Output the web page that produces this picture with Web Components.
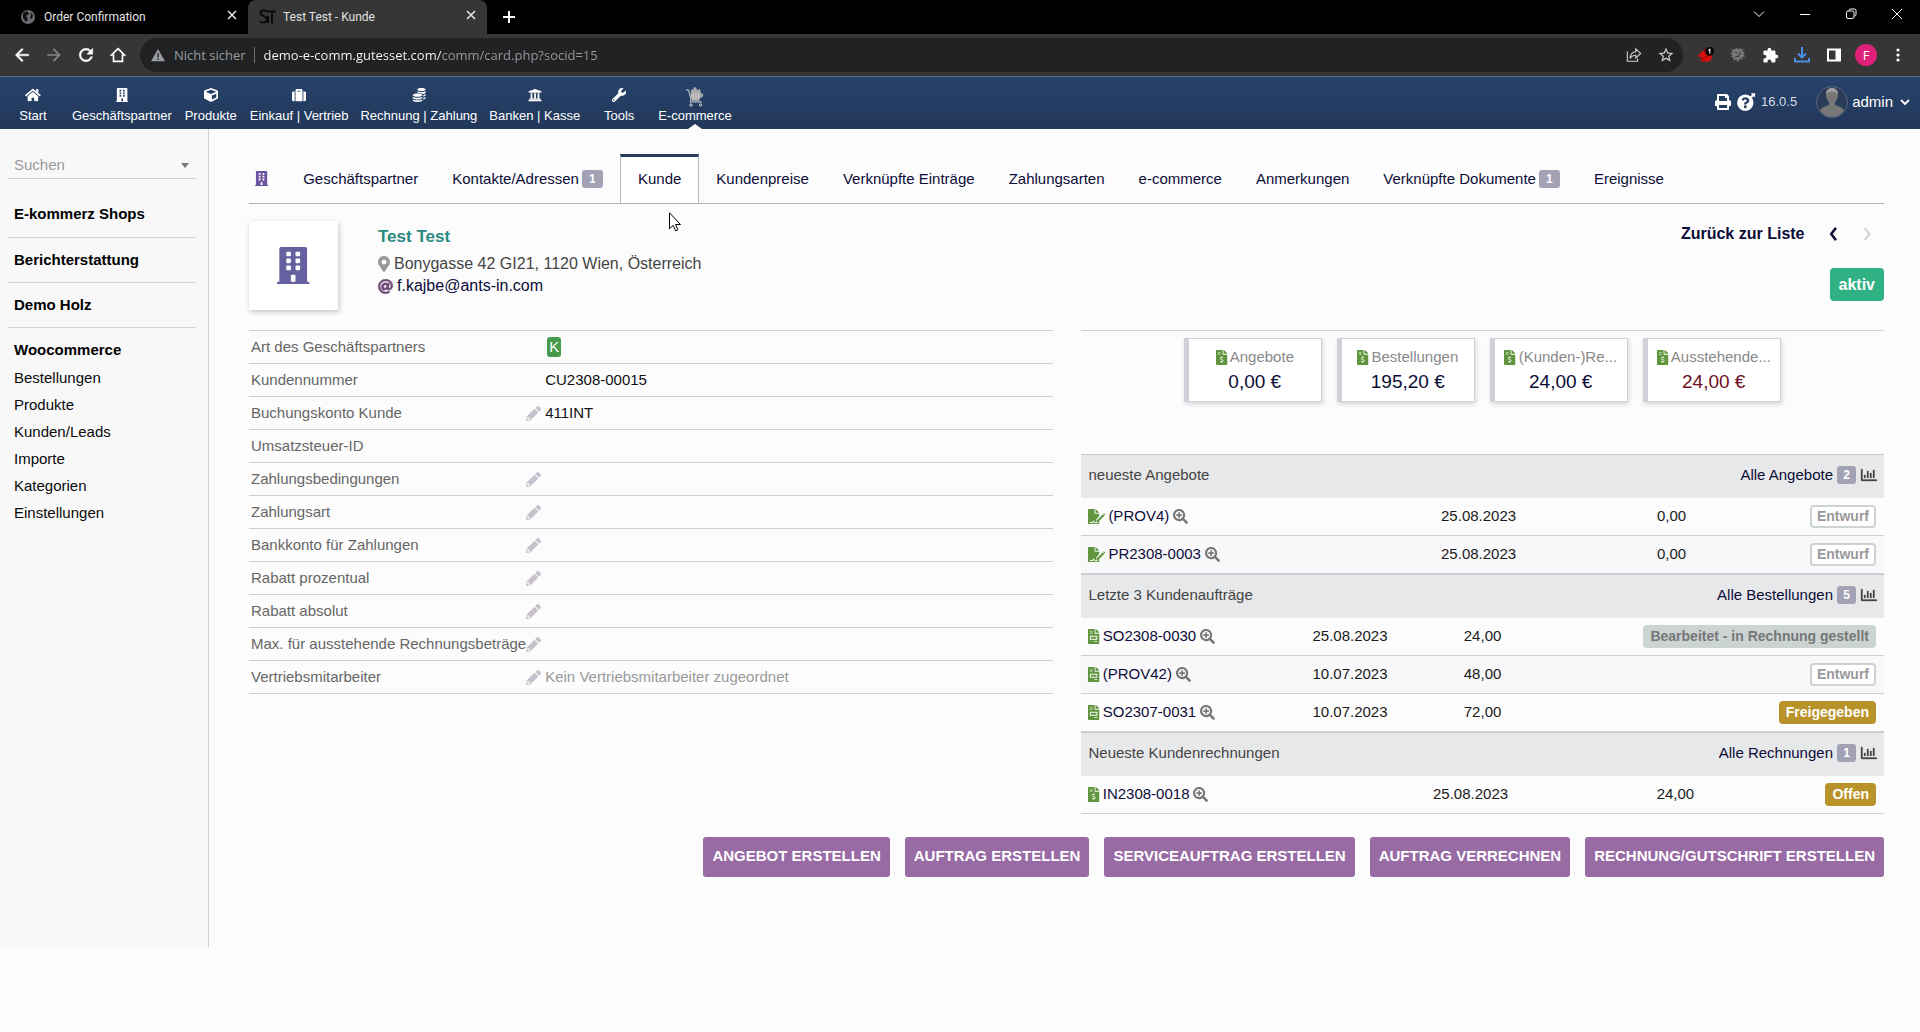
<!DOCTYPE html>
<html lang="de">
<head>
<meta charset="utf-8">
<title>Test Test - Kunde</title>
<style>
  body { margin: 0; background: #fcfcfc; color: #111; font: 15px/20px "Liberation Sans", Arial, sans-serif; }
</style>
</head>
<body>
<browser-bar></browser-bar>
<top-nav></top-nav>
<app-layout>
  <side-menu slot="side"></side-menu>
  <page-tabs></page-tabs>
  <company-banner></company-banner>
  <card-columns>
    <company-facts slot="left"></company-facts>
    <summary-cards slot="right"></summary-cards>
    <document-list slot="right" kind="offers"></document-list>
    <document-list slot="right" kind="orders"></document-list>
    <document-list slot="right" kind="invoices"></document-list>
  </card-columns>
  <action-bar></action-bar>
</app-layout>
<mouse-pointer></mouse-pointer>

<script>
const PAGE = 'M377 105L279.1 7c-4.500-4.500-10.600-7-17-7H256v128h128v-6.100c0-6.300-2.500-12.400-7-16.900zM224 136V0H24C10.700 0 0 10.700 0 24v464c0 13.300 10.700 24 24 24h336c13.300 0 24-10.700 24-24V160H248c-13.200 0-24-10.800-24-24z';
const ICONS = {
  building: ['0 0 448 512', '<path d="M436 480h-20V24c0-13.255-10.745-24-24-24H56C42.745 0 32 10.745 32 24v456H12c-6.627 0-12 5.373-12 12v20h448v-20c0-6.627-5.373-12-12-12zM128 76c0-6.627 5.373-12 12-12h40c6.627 0 12 5.373 12 12v40c0 6.627-5.373 12-12 12h-40c-6.627 0-12-5.373-12-12V76zm0 96c0-6.627 5.373-12 12-12h40c6.627 0 12 5.373 12 12v40c0 6.627-5.373 12-12 12h-40c-6.627 0-12-5.373-12-12v-40zm52 148h-40c-6.627 0-12-5.373-12-12v-40c0-6.627 5.373-12 12-12h40c6.627 0 12 5.373 12 12v40c0 6.627-5.373 12-12 12zm76 160h-64v-84c0-6.627 5.373-12 12-12h40c6.627 0 12 5.373 12 12v84zm64-172c0 6.627-5.373 12-12 12h-40c-6.627 0-12-5.373-12-12v-40c0-6.627 5.373-12 12-12h40c6.627 0 12 5.373 12 12v40zm0-96c0 6.627-5.373 12-12 12h-40c-6.627 0-12-5.373-12-12v-40c0-6.627 5.373-12 12-12h40c6.627 0 12 5.373 12 12v40zm0-96c0 6.627-5.373 12-12 12h-40c-6.627 0-12-5.373-12-12V76c0-6.627 5.373-12 12-12h40c6.627 0 12 5.373 12 12v40z"/>'],
  home: ['0 0 576 512', '<path d="M280.37 148.26L96 300.11V464a16 16 0 0 0 16 16l112.06-.29a16 16 0 0 0 15.920-16V368a16 16 0 0 1 16-16h64a16 16 0 0 1 16 16v95.640a16 16 0 0 0 16 16.050L464 480a16 16 0 0 0 16-16V300L295.67 148.26a12.190 12.190 0 0 0-15.300 0zM571.6 251.47L488 182.56V44.050a12 12 0 0 0-12-12h-56a12 12 0 0 0-12 12v72.610L318.47 43a48 48 0 0 0-61 0L4.340 251.47a12 12 0 0 0-1.600 16.900l25.500 31A12 12 0 0 0 45.150 301l235.22-193.74a12.190 12.190 0 0 1 15.300 0L530.9 301a12 12 0 0 0 16.900-1.600l25.500-31a12 12 0 0 0-1.700-16.930z"/>'],
  cube: ['0 0 512 512', '<path d="M239.1 6.300l-208 78c-18.700 7-31.100 25-31.100 45v225.1c0 18.200 10.300 34.800 26.500 42.900l208 104c13.500 6.800 29.400 6.800 42.900 0l208-104c16.300-8.100 26.500-24.800 26.500-42.900V129.3c0-20-12.400-37.900-31.100-44.900l-208-78C262 2.200 250 2.200 239.1 6.300zM256 68.400l192 72v1.100l-192 78-192-78v-1.100l192-72zm32 356V275.5l160-65v133.9l-160 80z"/>'],
  suitcase: ['0 0 512 512', '<path d="M128 480h256V80c0-26.500-21.500-48-48-48H176c-26.500 0-48 21.500-48 48v400zm64-384h128v32H192V96zm320 80v256c0 26.500-21.500 48-48 48h-48V128h48c26.500 0 48 21.500 48 48zM96 480H48c-26.500 0-48-21.500-48-48V176c0-26.500 21.500-48 48-48h48v352z"/>'],
  bank: ['0 0 512 512', '<path d="M496 128v16a8 8 0 0 1-8 8h-24v12c0 6.627-5.373 12-12 12H60c-6.627 0-12-5.373-12-12v-12H24a8 8 0 0 1-8-8v-16a8 8 0 0 1 4.941-7.392l232-88a7.996 7.996 0 0 1 6.118 0l232 88A8 8 0 0 1 496 128zm-24 304H40c-13.255 0-24 10.745-24 24v16a8 8 0 0 0 8 8h464a8 8 0 0 0 8-8v-16c0-13.255-10.745-24-24-24zM96 192v192H60c-6.627 0-12 5.373-12 12v20h416v-20c0-6.627-5.373-12-12-12h-36V192h-64v192h-64V192h-64v192h-64V192H96z"/>'],
  wrench: ['0 0 512 512', '<path d="M507.73 109.1c-2.240-9.030-13.540-12.090-20.120-5.510l-74.360 74.360-67.880-11.310-11.310-67.880 74.360-74.360c6.620-6.620 3.430-17.900-5.660-20.160-47.380-11.740-99.550.91-136.58 37.930-39.640 39.640-50.550 97.100-34.050 147.2L18.740 402.76c-24.990 24.990-24.990 65.510 0 90.500 24.990 24.990 65.510 24.990 90.500 0l213.21-213.21c50.120 16.710 107.47 5.680 147.37-34.220 37.070-37.070 49.700-89.320 37.910-136.73zM64 472c-13.260 0-24-10.750-24-24 0-13.260 10.750-24 24-24s24 10.750 24 24c0 13.250-10.750 24-24 24z"/>'],
  coins: ['0 0 16 16', '<path d="M6 1.700C6 .8 8 0 10.800 0s4.800.8 4.800 1.700-2 1.800-4.800 1.800S6 2.600 6 1.700zM15.600 3.500v1.700c0 .8-1.500 1.500-3.600 1.700-.9-.8-2.700-1.300-4.800-1.500C6.400 5 6 4.600 6 4.200V3.500c1 .7 2.800 1.100 4.800 1.100s3.800-.4 4.800-1.100zM15.400 6.900v1.500c0 .6-1 1.200-2.500 1.500V8c1-.3 1.900-.6 2.500-1.100zM15.400 10.200v1.500c0 .6-1 1.200-2.500 1.500v-1.900c1-.3 1.900-.6 2.500-1.100zM.8 8.200c0-1 2.500-1.800 5.600-1.800s5.500.8 5.500 1.800S9.500 10 6.400 10 .8 9.200.8 8.200zM.8 9.900c1.200.8 3.300 1.200 5.600 1.200s4.300-.4 5.500-1.200v1.500c0 1-2.400 1.700-5.500 1.700S.8 12.400.8 11.400zM.8 13c1.200.7 3.300 1.100 5.600 1.100s4.300-.4 5.500-1.100v1.300c0 .9-2.400 1.700-5.500 1.700s-5.600-.8-5.600-1.700z"/>'],
  cart: ['0 0 18 20', '<path fill="#aaa" d="M5 3l2.500-1L8 0l2 .5L11 3l3-1 1 4 2.500 1.500-1.500 3-2 .5-.5 3H6L4.500 9z"/><path d="M0 3h2.500l2.500 9.500-1 2.500h12M7 6l.5 6M10 6v6M12.500 6v6" fill="none" stroke="#d5d5d5"/><g fill="none" stroke="#ccc"><circle cx="5" cy="18" r="1.200"/><circle cx="14.500" cy="18" r="1.200"/></g>'],
  zoom: ['0 0 512 512', '<path d="M304 192v32c0 6.600-5.400 12-12 12h-56v56c0 6.600-5.400 12-12 12h-32c-6.600 0-12-5.400-12-12v-56h-56c-6.600 0-12-5.400-12-12v-32c0-6.600 5.400-12 12-12h56v-56c0-6.600 5.400-12 12-12h32c6.600 0 12 5.400 12 12v56h56c6.600 0 12 5.400 12 12zm201 284.7L476.7 505c-9.400 9.400-24.600 9.400-33.900 0L343 405.3c-4.500-4.500-7-10.600-7-17V372c-35.300 27.600-79.700 44-128 44C93.100 416 0 322.9 0 208S93.100 0 208 0s208 93.100 208 208c0 48.300-16.400 92.700-44 128h16.300c6.400 0 12.500 2.500 17 7l99.700 99.700c9.300 9.400 9.300 24.600 0 34zM344 208c0-75.200-60.800-136-136-136S72 132.8 72 208s60.800 136 136 136 136-60.800 136-136z"/>'],
  pencil: ['0 0 512 512', '<path d="M497.9 142.1l-46.100 46.100c-4.700 4.700-12.300 4.700-17 0l-111-111c-4.700-4.700-4.700-12.300 0-17l46.100-46.100c18.700-18.700 49.100-18.700 67.900 0l60.100 60.100c18.800 18.700 18.800 49.100 0 67.900zM284.2 99.800L21.600 362.4.4 483.9c-2.900 16.400 11.400 30.600 27.800 27.800l121.5-21.300 262.6-262.6c4.700-4.700 4.700-12.300 0-17l-111-111c-4.800-4.700-12.400-4.700-17.100 0zM88 424h48v36.300l-64.500 11.300-31.100-31.100L51.700 376H88v48z"/>'],
  marker: ['0 0 384 512', '<path d="M172.268 501.67C26.970 291.031 0 269.413 0 192 0 85.961 85.961 0 192 0s192 85.961 192 192c0 77.413-26.970 99.031-172.268 309.67-9.535 13.774-29.930 13.773-39.464 0zM192 272c44.183 0 80-35.817 80-80s-35.817-80-80-80-80 35.817-80 80 35.817 80 80 80z"/>'],
  at: ['0 0 512 512', '<path stroke="currentColor" stroke-width="14" d="M256 8C118.941 8 8 118.919 8 256c0 137.059 110.919 248 248 248 48.154 0 95.342-14.140 135.408-40.223 12.005-7.815 14.625-24.288 5.552-35.372l-10.177-12.433c-7.671-9.371-21.179-11.667-31.373-5.129C325.92 429.757 291.314 440 256 440c-101.458 0-184-82.542-184-184S154.542 72 256 72c100.139 0 184 57.619 184 160 0 38.786-21.093 79.742-58.170 83.693-17.349-.454-16.910-12.857-13.476-30.024l23.433-121.11C394.653 149.75 383.308 136 368.225 136h-44.981a13.518 13.518 0 0 0-13.432 11.993l-.01.092c-14.697-17.901-40.448-21.775-59.971-21.775-74.580 0-137.831 62.234-137.831 151.46 0 65.303 36.785 105.87 96 105.87 26.984 0 57.369-15.637 74.991-38.333 9.522 34.104 40.613 34.104 70.710 34.104C462.609 379.41 504 307.798 504 232 504 95.653 394.023 8 256 8zm-21.680 304.43c-22.249 0-36.070-15.623-36.070-40.771 0-44.993 30.779-72.729 58.630-72.729 22.292 0 35.601 15.241 35.601 40.770 0 45.061-33.875 72.730-58.161 72.730z"/>'],
  order: ['0 0 384 512', `<path fill-rule="evenodd" d="${PAGE}M64 64h96v24H64zM64 128h96v24H64zM64 232h256v136H64zM96 264v72h192v-72zM208 416h112v28H208z"/>`],
  invoice: ['0 0 384 512', `<path fill-rule="evenodd" d="${PAGE}M64 64h96v24H64zM64 128h96v24H64z"/><path d="M244 266c-20-24-98-22-98 20 0 52 98 26 98 78 0 42-80 46-104 16M192 220v36M192 396v40" fill="none" stroke="#fff" stroke-width="32"/>`],
  signature: ['0 0 576 512', '<path fill-rule="evenodd" d="M256 0v128h128zM224 136V0H24C10.700 0 0 10.700 0 24v464c0 13.300 10.700 24 24 24h336c13.300 0 24-10.700 24-24v-70l-70 68H230l-30-50-30 44H64v-36h88l38-60 52 68h36v-84L384 230v-70H248c-13.200 0-24-10.800-24-24z"/><path d="M288 400l220-222 52 52-220 220h-52z"/><path d="M520 166l20-20 56 52-24 24z"/>'],
  chart: ['0 0 512 512', '<path stroke="currentColor" stroke-width="10" d="M396.8 352h22.400c6.400 0 12.800-6.400 12.800-12.800V108.8c0-6.400-6.400-12.800-12.800-12.800h-22.400c-6.400 0-12.800 6.400-12.800 12.800v230.4c0 6.400 6.400 12.800 12.800 12.800zm-192 0h22.400c6.400 0 12.800-6.400 12.800-12.800V140.8c0-6.400-6.400-12.800-12.800-12.800h-22.400c-6.400 0-12.800 6.400-12.800 12.800v198.4c0 6.400 6.400 12.800 12.800 12.800zm96 0h22.400c6.400 0 12.800-6.400 12.800-12.800V204.8c0-6.400-6.400-12.800-12.800-12.800h-22.400c-6.400 0-12.800 6.400-12.800 12.800v134.4c0 6.400 6.400 12.800 12.800 12.800zM496 400H48V80c0-8.840-7.160-16-16-16H16C7.160 64 0 71.160 0 80v336c0 17.670 14.330 32 32 32h464c8.840 0 16-7.160 16-16v-16c0-8.840-7.160-16-16-16zm-387.2-48h22.400c6.400 0 12.800-6.400 12.800-12.800v-70.400c0-6.400-6.400-12.800-12.800-12.800h-22.400c-6.400 0-12.800 6.400-12.800 12.800v70.400c0 6.400 6.400 12.800 12.800 12.800z"/>'],
  print: ['0 0 512 512', '<path d="M448 192V77.250c0-8.490-3.370-16.620-9.370-22.630L393.37 9.370c-6-6-14.140-9.370-22.630-9.370H96C78.330 0 64 14.330 64 32v160c-35.350 0-64 28.650-64 64v112c0 8.840 7.160 16 16 16h48v96c0 17.670 14.330 32 32 32h320c17.670 0 32-14.330 32-32v-96h48c8.840 0 16-7.160 16-16V256c0-35.350-28.650-64-64-64zm-64 256H128v-96h256v96zm0-224H128V64h192v48c0 8.840 7.160 16 16 16h48v96z"/>'],
  help: ['0 -40 560 552', '<path d="M504 256c0 136.997-111.043 248-248 248S8 392.997 8 256C8 119.083 119.043 8 256 8s248 111.083 248 248zM262.655 90c-54.497 0-89.255 22.957-116.549 63.758-3.536 5.286-2.353 12.415 2.715 16.258l34.699 26.310c5.205 3.947 12.621 3.008 16.665-2.122 17.864-22.658 30.113-35.797 57.303-35.797 20.429 0 45.698 13.148 45.698 32.958 0 14.976-12.363 22.667-32.534 33.976C247.128 238.528 216 254.941 216 296v4c0 6.627 5.373 12 12 12h56c6.627 0 12-5.373 12-12v-1.333c0-28.462 83.186-29.647 83.186-106.667 0-58.002-60.165-102-116.531-102zM256 338c-25.365 0-46 20.635-46 46 0 25.364 20.635 46 46 46s46-20.636 46-46c0-25.365-20.635-46-46-46z"/><path d="M420-36h136V100l-44-44-60 60-50-50 60-60z"/>'],
  avatar: ['0 0 32 32', '<circle cx="16" cy="16" r="15.500" fill="#2b3c58" stroke="#55657e"/><path d="M16 2c-3.600 0-6 2.600-6 6.500 0 3 1 6 3 7.500v3l-6.500 2.500c-1.200.6-2 1.800-2.400 3.200A15 15 0 0 0 16 31a15 15 0 0 0 11.900-6.300c-.4-1.400-1.200-2.600-2.400-3.200L19 19v-3c2-1.500 3-4.500 3-7.500C22 4.600 19.600 2 16 2z" fill="#77777a"/><path d="M16 2c-3.600 0-6 2.600-6 6.500 2-4 10-4 12 0C22 4.600 19.600 2 16 2z" fill="#a0a0a0"/>'],
  down: ['0 0 10 10', '<path d="M1 3l4 4 4-4" fill="none" stroke="currentColor" stroke-width="1.800"/>'],
  left: ['0 0 10 16', '<path d="M8 1L2.500 8 8 15" fill="none" stroke="currentColor" stroke-width="2.800"/>'],
  right: ['0 0 10 16', '<path d="M2 1.500L7.500 8 2 14.500" fill="none" stroke="currentColor" stroke-width="2"/>'],
  globe: ['0 0 16 16', '<circle cx="8" cy="8" r="7" fill="#6a6d72"/><path d="M3 4l4-2 2 3-3 2 2 3-2 3-3-4zM10 3l3 3-1 4-2-1 1-3z" fill="#111"/>'],
  stlogo: ['0 0 18 18', '<path d="M9 4C7 1.500 1.500 2 1.500 5s6.500 3 6.500 6.500-5 4-7 1.500M9 3.500h8M13 3.500v12M9 8v7" fill="none" stroke="#0b0b0d" stroke-width="2"/>'],
  close: ['0 0 12 12', '<path d="M2 2l8 8M10 2l-8 8" stroke="currentColor" stroke-width="1.600"/>'],
  plus: ['0 0 14 14', '<path d="M7 1v12M1 7h12" stroke="currentColor" stroke-width="2"/>'],
  winchevron: ['0 0 12 12', '<path d="M1 3.500l5 5 5-5" fill="none" stroke="currentColor"/>'],
  minimize: ['0 0 12 12', '<path d="M1 6.500h10" stroke="currentColor"/>'],
  restore: ['0 0 12 12', '<path d="M4 2.500q0-1.500 1.500-1.500h4q1.500 0 1.500 1.500v4q0 1.500-1.500 1.500" fill="none" stroke="currentColor"/><rect x="1.500" y="3" width="7.500" height="7.500" rx="1.500" fill="none" stroke="currentColor"/>'],
  winclose: ['0 0 12 12', '<path d="M1 1l10 10M11 1L1 11" stroke="currentColor"/>'],
  back: ['0 0 24 24', '<path d="M20 11H7.830l5.590-5.590L12 4l-8 8 8 8 1.410-1.410L7.830 13H20v-2z" stroke="currentColor" stroke-width=".6"/>'],
  forward: ['0 0 24 24', '<path d="M12 4l-1.410 1.410L16.170 11H4v2h12.170l-5.580 5.590L12 20l8-8z"/>'],
  reload: ['0 0 24 24', '<path d="M17.650 6.350C16.200 4.900 14.210 4 12 4c-4.420 0-7.990 3.580-7.990 8s3.570 8 7.990 8c3.730 0 6.840-2.550 7.730-6h-2.080c-.82 2.330-3.040 4-5.650 4-3.310 0-6-2.690-6-6s2.690-6 6-6c1.660 0 3.140.69 4.220 1.780L13 11h7V4l-2.350 2.350z" stroke="currentColor" stroke-width=".6"/>'],
  house: ['0 0 24 24', '<path d="M12 3.500l8.500 8.500h-2.500v8.500H6V12H3.500z" fill="none" stroke="currentColor" stroke-width="2.200"/>'],
  warning: ['0 0 16 16', '<path fill-rule="evenodd" d="M8 1L0 15h16zM7.200 6h1.600v4.500H7.200zM7.200 11.700h1.600v1.600H7.200z"/>'],
  share: ['0 0 18 18', '<path d="M1.500 5v11h11.500v-3M4.500 13c.5-5 3-7.500 6.500-7.700V2l5.500 5.200-5.500 5.200V9.300c-3 0-4.800 1-6.500 3.700z" fill="none" stroke="currentColor" stroke-width="1.300"/>'],
  star: ['0 0 24 24', '<path d="M22 9.240l-7.190-.62L12 2 9.190 8.630 2 9.240l5.460 4.730L5.820 21 12 17.270 18.180 21l-1.630-7.030L22 9.240zM12 15.400l-3.760 2.270 1-4.280-3.320-2.880 4.380-.38L12 6.100l1.710 4.040 4.380.38-3.320 2.880 1 4.280L12 15.400z"/>'],
  bug: ['0 0 20 20', '<path d="M3 8l3-2 4-3 4 1 2 3 1 5-2 4-4 2-3-1-3 1-1-3 2-2-4-1-2-2 3 0z" fill="#d40f0f"/><path d="M9 2l-1 5M6 15l6-4" stroke="#7a0000"/><circle cx="14" cy="6" r="4.800" fill="#000"/><path d="M12.800 5l1.500-1.200V8.500" fill="none" stroke="#fff" stroke-width="1.200"/>'],
  graybug: ['0 0 20 20', '<path d="M9 2l1 2 3-2 0 2 3-1-1 3 3 1-2 2 2 3-3 0 0 3-3-1-2 4-2-3-3 1 0-3-3-1 2-2-3-2 3-1-1-3 3 0z" fill="#77777a"/><path d="M7 7l2 1M12 7v3M7 12l5-1" stroke="#3a3a3a" stroke-width="1.400"/>'],
  puzzle: ['0 0 24 24', '<path d="M20.500 11H19V7c0-1.100-.9-2-2-2h-4V3.500C13 2.120 11.880 1 10.500 1S8 2.120 8 3.500V5H4c-1.100 0-1.990.9-1.990 2v3.800H3.500c1.490 0 2.700 1.210 2.700 2.700s-1.210 2.700-2.700 2.700H2V20c0 1.100.9 2 2 2h3.800v-1.500c0-1.490 1.210-2.700 2.700-2.700 1.490 0 2.700 1.210 2.700 2.700V22H17c1.100 0 2-.9 2-2v-4h1.500c1.380 0 2.500-1.120 2.500-2.500S21.880 11 20.500 11z"/>'],
  download: ['0 0 18 18', '<path d="M9 1v10M5 7.500l4 4 4-4M2 12v3.500h14V12" fill="none" stroke="#4a8fe0" stroke-width="2"/>'],
  panel: ['0 0 16 16', '<path fill-rule="evenodd" d="M1 1.500h14v13H1zM3 3.500v9h6.500v-9z"/>'],
  dots: ['0 0 16 16', '<circle cx="8" cy="3" r="1.600"/><circle cx="8" cy="8" r="1.600"/><circle cx="8" cy="13" r="1.600"/>'],
};
const BASE = `*{box-sizing:border-box} a{color:inherit;text-decoration:none} button{font:inherit;color:inherit;background:none;border:0;padding:0;cursor:pointer} ul{list-style:none;margin:0;padding:0}`;
function element(name, css, render) {
  customElements.define(name, class extends HTMLElement {
    constructor() { super(); this.attachShadow({ mode: 'open' }); }
    connectedCallback() {
      const t = document.createElement('template');
      t.innerHTML = `<style>${BASE}${css}</style>${render(this)}`;
      this.shadowRoot.replaceChildren(t.content.cloneNode(true));
    }
  });
}
const icon = (name, size = 16) => `<ui-icon name="${name}" style="height:${size}px"></ui-icon>`;

element('ui-icon', ':host{display:inline-block;flex:none} svg{display:block;height:100%;width:auto;fill:currentColor;overflow:visible}', el => {
  const [box, body] = ICONS[el.getAttribute('name')];
  return `<svg viewBox="${box}" aria-hidden="true">${body}</svg>`;
});

element('count-badge', ':host{display:inline-block;min-width:19px;padding:0 6px;border-radius:3px;background:#a3a2b5;color:#fff;font:bold 12px/18px "Liberation Sans",Arial,sans-serif;text-align:center}', () => '<slot></slot>');

element('status-badge', `:host{display:inline-block;padding:0 5px;border:2px solid #cbd3d3;border-radius:4px;background:#fff;color:#999;font:bold 14px/19px "Liberation Sans",Arial,sans-serif}
  :host([tone=billed]){background:#cbd3d3;color:#777} :host([tone=open]){background:#b9932a;border-color:#b9932a;color:#fff}`, () => '<slot></slot>');

element('browser-bar', `
  :host{display:block;background:#000;color:#fff;font:12px/16px Roboto,"Open Sans",sans-serif;border-bottom:1px solid #5b6f8c}
  .strip{display:flex;height:34px;align-items:stretch}
  .tab{display:flex;align-items:center;gap:8px;width:248px;padding:0 10px 0 20px;color:#e3e3e3}
  .tab span{flex:1} .tab.on{width:239px;gap:6px;padding-left:11px;background:#363636;border-radius:8px 8px 0 0}
  .new{width:44px;display:grid;place-items:center}
  .win{display:flex;margin-left:auto} .win button{width:46px;height:28px;display:grid;place-items:center}
  .tools{display:flex;align-items:center;height:42px;background:#363636;padding:0 6px}
  .tools>button{width:32px;height:32px;display:grid;place-items:center}
  .box{flex:1;display:flex;align-items:center;height:34px;margin:0 7px 0 6px;padding:0 1px 0 11px;border-radius:17px;background:#212224;color:#9a9da1;font:13px/18px "Open Sans","Noto Sans",sans-serif}
  .box button{width:32px;height:32px;display:grid;place-items:center;color:#d0d0d0}
  .box span{margin:0 8px 0 9px} .box i{width:1px;height:16px;background:#6b6e72;margin-right:9px}
  input{flex:1;border:0;outline:0;padding:0;font:inherit;background:linear-gradient(90deg,#fff 178px,#9a9da1 178px);background-clip:text;-webkit-background-clip:text;-webkit-text-fill-color:transparent;color:#9a9da1}
  .face{width:22px;height:22px;border-radius:50%;background:#e0217a;display:grid;place-items:center;font:13px/22px "Open Sans",sans-serif}
`, () => `
  <div class="strip">
    <div class="tab">${icon('globe')}<span>Order Confirmation</span><button aria-label="Tab schließen">${icon('close', 12)}</button></div>
    <div class="tab on">${icon('stlogo', 18)}<span>Test Test - Kunde</span><button aria-label="Tab schließen">${icon('close', 12)}</button></div>
    <button class="new" aria-label="Neuer Tab">${icon('plus', 14)}</button>
    <div class="win">${['winchevron', 'minimize', 'restore', 'winclose'].map(n => `<button aria-label="${n}">${icon(n, 12)}</button>`).join('')}</div>
  </div>
  <div class="tools">
    <button aria-label="Zurück">${icon('back', 20)}</button><button aria-label="Vorwärts" style="color:#85878a">${icon('forward', 20)}</button>
    <button aria-label="Neu laden">${icon('reload', 20)}</button><button aria-label="Startseite">${icon('house', 18)}</button>
    <div class="box">${icon('warning', 14)}<span>Nicht sicher</span><i></i>
      <input aria-label="Adresse" value="demo-e-comm.gutesset.com/comm/card.php?socid=15">
      <button aria-label="Teilen">${icon('share', 16)}</button><button aria-label="Lesezeichen">${icon('star', 18)}</button></div>
    ${[['bug', 18], ['graybug', 18], ['puzzle', 17], ['download', 18], ['panel', 16]].map(([n, s]) => `<button aria-label="${n}">${icon(n, s)}</button>`).join('')}
    <button aria-label="Profil"><span class="face">F</span></button><button aria-label="Menü">${icon('dots')}</button>
  </div>`);

element('top-nav', `
  :host{display:flex;height:52px;background:linear-gradient(#27426a,#22385a);color:#fff;font-size:13px;line-height:16px}
  ul{display:flex;height:52px} li{min-width:66px;padding:10px 6px 0;position:relative}
  li a{display:flex;flex-direction:column;align-items:center;gap:5px}
  li b{height:16px;display:grid;place-items:center}
  li.on::after{content:"";position:absolute;left:50%;bottom:0;margin-left:-7px;border:7px solid transparent;border-top:0;border-bottom:5px solid #fcfcfc}
  .user{margin-left:auto;display:flex;align-items:center;gap:6px;padding:0 10px 2px 0}
  .user a,.user button{display:flex;align-items:center} .who{font-size:15px;gap:4px} .who span{margin-right:3px} .ver{color:#d8dce4;margin-right:13px}
`, () => `
  <nav><ul>${[['home', 'Start', 14], ['building', 'Geschäftspartner', 14], ['cube', 'Produkte', 14], ['suitcase', 'Einkauf | Vertrieb', 14], ['coins', 'Rechnung | Zahlung', 14], ['bank', 'Banken | Kasse', 14], ['wrench', 'Tools', 14], ['cart', 'E-commerce', 20]]
    .map(([n, t, s]) => `<li${n === 'cart' ? ' class="on"' : ''}><a href="#"><b>${icon(n, s)}</b>${t}</a></li>`).join('')}</ul></nav>
  <div class="user"><a href="#" aria-label="Drucken">${icon('print', 16)}</a><a href="#" aria-label="Hilfe">${icon('help', 18)}</a><span class="ver">16.0.5</span>
    <button class="who">${icon('avatar', 32)}<span>admin</span>${icon('down', 10)}</button></div>`);

element('app-layout', `
  :host{display:flex;align-items:stretch}
  aside{flex:none;width:209px;background:#f8f8f9;border-right:1px solid #cfcfd4}
  main{flex:1;min-width:0;padding:25px 36px 70px 40px}
`, () => '<aside><slot name="side"></slot></aside><main><slot></slot></main>');

element('side-menu', `
  :host{display:block;padding:22px 12px 0 8px}
  .search{position:relative;display:flex;border-bottom:1px solid #cfcfcf;margin:0 0 24px}
  .search::after{content:"";position:absolute;right:7px;top:12px;border:4px solid transparent;border-top:5px solid #777;border-bottom:0;pointer-events:none}
  select{appearance:none;width:100%;height:27px;border:0;background:none;padding:0 6px;font:inherit;color:#9a9a9a}
  section{padding:0 6px;border-bottom:1px solid #d3d3d8;margin-bottom:10px;height:35px}
  section:last-of-type{border:0;height:auto;margin:0}
  h2{margin:0;font-size:15px;line-height:24px;color:#000} section:first-of-type h2{line-height:21px}
  li{line-height:27px;color:#0a0a0a} ul{padding-top:2px}
`, () => `
  <div class="search"><select aria-label="Suchen"><option>Suchen</option></select></div>
  <section><h2><a href="#">E-kommerz Shops</a></h2></section>
  <section><h2><a href="#">Berichterstattung</a></h2></section>
  <section><h2><a href="#">Demo Holz</a></h2></section>
  <section><h2><a href="#">Woocommerce</a></h2><ul>${['Bestellungen', 'Produkte', 'Kunden/Leads', 'Importe', 'Kategorien', 'Einstellungen'].map(t => `<li><a href="#">${t}</a></li>`).join('')}</ul></section>`);

element('page-tabs', `
  :host{display:block;border-bottom:1px solid #b4b4a8}
  ul{display:flex;height:49px} li{display:flex;align-items:center;gap:3px;padding:0 17px;color:#0c0c38} count-badge{min-width:21px}
  li:first-child{padding-left:6px;color:#6c55a0;padding-right:18px}
  li.on{border:1px solid #b8b8ac;border-top:3px solid #263c5c;border-bottom:0;background:#fff;padding-bottom:3px}
`, () => `<nav><ul><li>${icon('building', 15)}</li>${[['Geschäftspartner'], ['Kontakte/Adressen', 1], ['Kunde'], ['Kundenpreise'], ['Verknüpfte Einträge'], ['Zahlungsarten'], ['e-commerce'], ['Anmerkungen'], ['Verknüpfte Dokumente', 1], ['Ereignisse']]
    .map(([t, n]) => `<li${t === 'Kunde' ? ' class="on"' : ''}><a href="#">${t}</a>${n ? `<count-badge>${n}</count-badge>` : ''}</li>`).join('')}</ul></nav>`);

element('company-banner', `
  :host{display:flex;padding:17px 0 20px;gap:40px}
  .photo{width:89px;height:89px;display:grid;place-items:center;background:#fff;color:#6560a0;box-shadow:1px 2px 5px #c4c4cc}
  .info{flex:1;font-size:16px;line-height:22px;color:#444} h1{margin:5px 0;font-size:17px;line-height:22px;color:#2b8a80}
  .info div{display:flex;align-items:center;gap:4px} .pin{color:#999} .mail{color:#6f4a78} .mail a{color:#0c0c38} address{font-style:normal;color:#444}
  .nav{display:flex;flex-direction:column;align-items:flex-end;gap:24px;font-size:16px;font-weight:bold}
  .nav p{display:flex;align-items:center;margin:3px 0 0;color:#0c0c38} .nav p a+a{margin-left:24px} .nav p a,.nav p span{display:flex}
  .nav .next{margin:0 12px 0 26px;color:#ccc}
  mark{background:#2fb183;color:#fff;border-radius:4px;padding:0 9px;line-height:33px}
`, () => `
  <div class="photo">${icon('building', 37)}</div>
  <div class="info"><h1>Test Test</h1>
    <div class="pin">${icon('marker', 16)}<address>Bonygasse 42 GI21, 1120 Wien, Österreich</address></div>
    <div class="mail">${icon('at', 15)}<a href="#">f.kajbe@ants-in.com</a></div></div>
  <div class="nav"><p><a href="#">Zurück zur Liste</a><a href="#" aria-label="Vorheriger">${icon('left', 14)}</a><span class="next">${icon('right', 14)}</span></p><mark>aktiv</mark></div>`);

element('card-columns', `
  :host{display:grid;grid-template-columns:1fr 1fr;gap:28px}
  .col{min-width:0;border-top:1px solid #cfcfd4}
`, () => '<div class="col"><slot name="left"></slot></div><div class="col"><slot name="right"></slot></div>');

element('company-facts', `
  :host{display:block} table{width:100%;border-collapse:separate;border-spacing:0}
  th,td{height:33px;padding:0 2px;border-bottom:1px solid #cfcfd4;font-weight:normal;text-align:left}
  th{width:36%;color:#666} th div{display:flex;justify-content:space-between;align-items:center;white-space:nowrap} button{display:flex;color:#c6c1cc}
  .none{color:#999} .k{display:inline-block;margin-left:2px;padding:0 2px;border-radius:3px;background:#469a4b;color:#fff}
`, () => `<table>${[['Art des Geschäftspartners', '<span class="k">K</span>'], ['Kundennummer', 'CU2308-00015'], ['Buchungskonto Kunde', '411INT', 1], ['Umsatzsteuer-ID', ''], ['Zahlungsbedingungen', '', 1], ['Zahlungsart', '', 1], ['Bankkonto für Zahlungen', '', 1], ['Rabatt prozentual', '', 1], ['Rabatt absolut', '', 1], ['Max. für ausstehende Rechnungsbeträge', '', 1], ['Vertriebsmitarbeiter', '<span class="none">Kein Vertriebsmitarbeiter zugeordnet</span>', 1]]
    .map(([k, v, e]) => `<tr><th scope="row"><div>${k}${e ? `<button aria-label="${k} bearbeiten">${icon('pencil', 15)}</button>` : ''}</div></th><td>${v}</td></tr>`).join('')}</table>`);

element('summary-cards', `
  :host{display:flex;justify-content:center;gap:15px;padding:7px 0 52px}
  a{width:138px;height:64px;padding:8px 3px 0;border:1px solid #d0d0d8;border-left:5px solid #d0d0d8;background:#fff;box-shadow:1px 2px 5px #d4d4da;text-align:center;color:#0c0c38}
  span{display:flex;justify-content:center;align-items:center;gap:3px;color:#888;white-space:nowrap} ui-icon{color:#5f953d}
  strong{display:block;font-weight:normal;font-size:19px;line-height:29px} .due{color:#6e1020}
`, () => [['Angebote', '0,00 €'], ['Bestellungen', '195,20 €'], ['(Kunden-)Re...', '24,00 €'], ['Ausstehende...', '24,00 €']]
    .map(([t, v], i) => `<a href="#"><span>${icon('invoice', 15)}${t}</span><strong${i === 3 ? ' class="due"' : ''}>${v}</strong></a>`).join(''));

const LISTS = {
  offers: { title: 'neueste Angebote', all: 'Alle Angebote', count: 2, icon: 'signature', cols: [44, 15, 17, 24],
    rows: [['(PROV4)', '25.08.2023', '0,00', 'Entwurf'], ['PR2308-0003', '25.08.2023', '0,00', 'Entwurf']] },
  orders: { title: 'Letzte 3 Kundenaufträge', all: 'Alle Bestellungen', count: 5, icon: 'order', cols: [28, 12, 13, 47],
    rows: [['SO2308-0030', '25.08.2023', '24,00', 'Bearbeitet - in Rechnung gestellt', 'billed'], ['(PROV42)', '10.07.2023', '48,00', 'Entwurf'], ['SO2307-0031', '10.07.2023', '72,00', 'Freigegeben', 'open']] },
  invoices: { title: 'Neueste Kundenrechnungen', all: 'Alle Rechnungen', count: 1, icon: 'invoice', cols: [43, 15, 19, 23],
    rows: [['IN2308-0018', '25.08.2023', '24,00', 'Offen', 'open']] },
};
element('document-list', `
  :host{display:block} table{width:100%;table-layout:fixed;border-collapse:separate;border-spacing:0}
  th{height:44px;padding:0;background:#e7e8ea;border-top:1px solid #c9c9cf;font-weight:normal;color:#444}
  th div{display:flex;align-items:center;gap:4px;padding:0 7px 3px 8px} th div a:first-of-type{margin-left:auto;color:#0c0c38} th div count-badge+a{display:flex;color:#444;margin-left:1px}
  td{height:38px;padding:0 7px 1px;border-bottom:1px solid #cfcfd4;color:#1a1a1a} tr:nth-child(even) td{background:#f8f8fa}
  td:last-child{padding-right:8px;text-align:right} td:nth-child(3){padding-right:5px;text-align:right}
  td div{display:flex;align-items:center;gap:4px;color:#0c0c38} td div>ui-icon{color:#5f953d} td div button{display:flex;color:#777}
`, el => {
  const l = LISTS[el.getAttribute('kind')];
  return `<table><colgroup>${l.cols.map(c => `<col style="width:${c}%">`).join('')}</colgroup>
    <thead><tr><th colspan="4"><div>${l.title}<a href="#">${l.all}</a><count-badge>${l.count}</count-badge><a href="#" aria-label="Statistik">${icon('chart', 16)}</a></div></th></tr></thead>
    <tbody>${l.rows.map(([r, d, a, s, tone = 'draft']) => `<tr><td><div>${icon(l.icon, 15)}<a href="#">${r}</a><button aria-label="Vorschau">${icon('zoom', 15)}</button></div></td><td>${d}</td><td>${a}</td><td><status-badge tone="${tone}">${s}</status-badge></td></tr>`).join('')}</tbody></table>`;
});

element('action-bar', `
  :host{display:flex;justify-content:flex-end;gap:15px;padding-top:23px}
  button{height:40px;padding:0 9px 3px;border-radius:3px;background:#986ba5;color:#fff;font-weight:bold}
`, () => ['ANGEBOT ERSTELLEN', 'AUFTRAG ERSTELLEN', 'SERVICEAUFTRAG ERSTELLEN', 'AUFTRAG VERRECHNEN', 'RECHNUNG/GUTSCHRIFT ERSTELLEN'].map(t => `<button>${t}</button>`).join(''));

element('mouse-pointer', ':host{position:absolute;left:669px;top:212px;pointer-events:none} svg{display:block}', () =>
  '<svg width="12" height="20" viewBox="0 0 12 20"><path d="M.5.8v16l3.700-3.500 2.400 5.500 2.300-1-2.400-5.300h5z" fill="#fff" stroke="#000"/></svg>');
</script>
</body>
</html>
